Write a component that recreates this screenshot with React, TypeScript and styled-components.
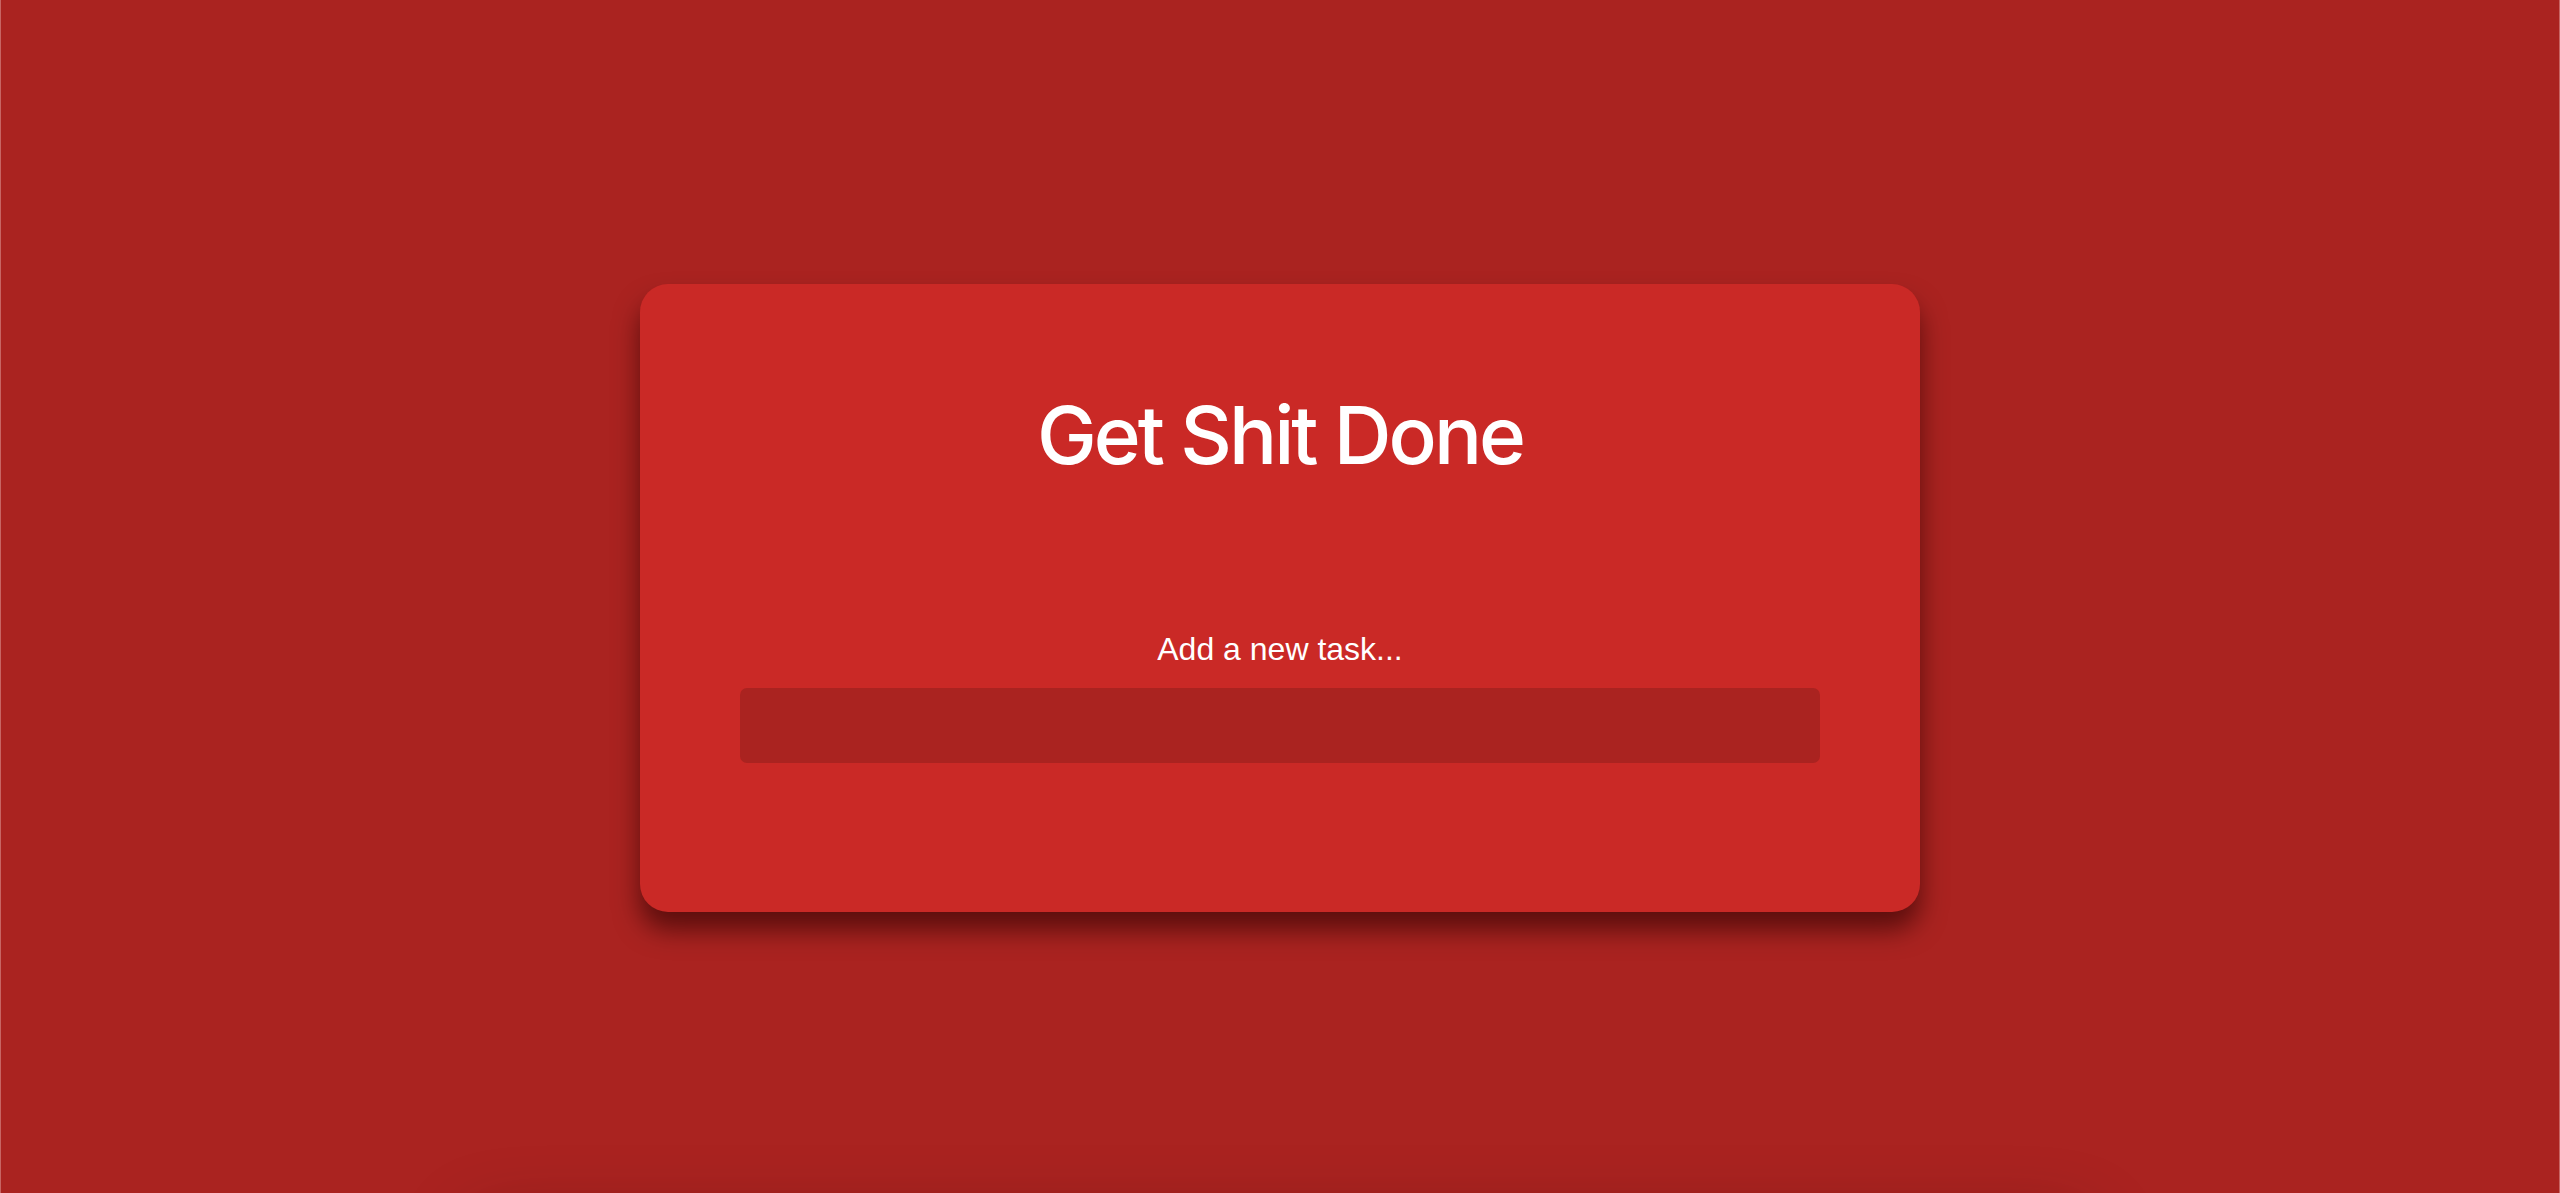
import React, { useState } from "react";
import styled, { createGlobalStyle } from "styled-components";

const GlobalStyle = createGlobalStyle`
  * { box-sizing: border-box; }
  html, body {
    margin: 0;
    padding: 0;
    background: #aa2320;
    font-family: "Liberation Sans", Arial, sans-serif;
    color: #ffffff;
  }
`;

const Page = styled.main`
  position: relative;
  height: 100vh;
  overflow: hidden;
  display: flex;
  align-items: center;
  justify-content: center;
  padding-top: 3px;
  background: #aa2320;
  border-left: 1px solid #c76563;
  border-right: 1px solid #c76563;

  &::after {
    content: "";
    position: absolute;
    left: 470px;
    right: 470px;
    top: calc(100% + 40px);
    height: 200px;
    border-radius: 28px;
    box-shadow: 0 -10px 70px rgba(40, 0, 0, 0.35);
  }
`;

const Card = styled.section`
  width: 1280px;
  display: flex;
  flex-direction: column;
  align-items: center;
  padding: 111px 100px 149px;
  background: #ca2926;
  border-radius: 28px;
  box-shadow: 0 18px 26px rgba(40, 0, 0, 0.6);
`;

const Title = styled.h1`
  margin: 0 0 158px;
  font-family: Inter, "Liberation Sans", Arial, sans-serif;
  font-size: 80px;
  line-height: 80px;
  font-weight: 500;
  letter-spacing: -3px;
  color: #ffffff;
`;

const Label = styled.label`
  display: block;
  margin-bottom: 23px;
  font-size: 32px;
  line-height: 32px;
  color: #ffffff;
`;

const TaskInput = styled.input`
  width: 100%;
  height: 75px;
  border: none;
  outline: none;
  border-radius: 7px;
  background: #aa2320;
  color: #ffffff;
  padding: 0 20px;
  font-family: "Liberation Sans", Arial, sans-serif;
  font-size: 28px;
`;

export default function App() {
  const [task, setTask] = useState("");
  return (
    <>
      <GlobalStyle />
      <Page>
        <Card>
          <Title>Get Shit Done</Title>
          <Label htmlFor="new-task">Add a new task...</Label>
          <TaskInput
            id="new-task"
            value={task}
            onChange={(e) => setTask(e.target.value)}
          />
        </Card>
      </Page>
    </>
  );
}
